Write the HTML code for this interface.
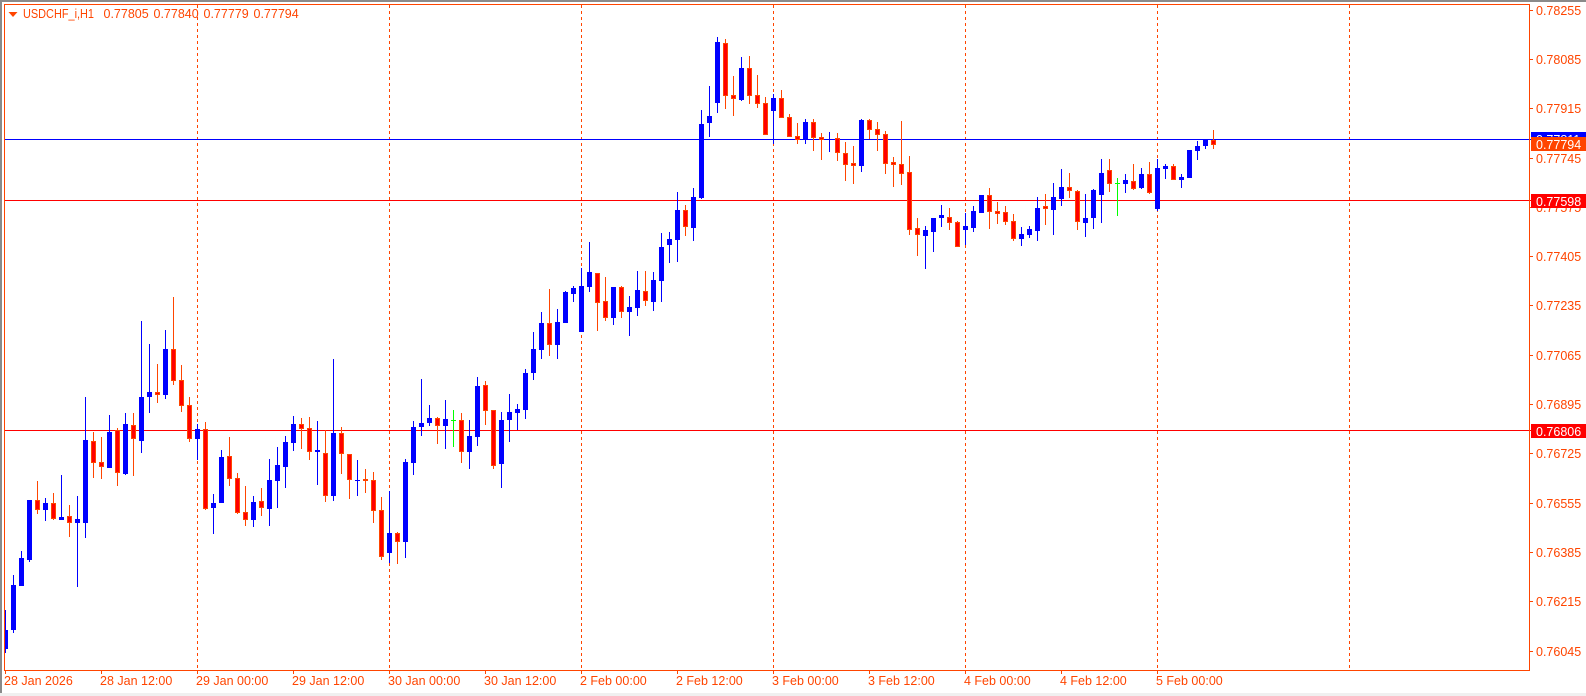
<!DOCTYPE html>
<html><head><meta charset="utf-8"><title>USDCHF_i,H1</title>
<style>
html,body{margin:0;padding:0;background:#fff;width:1586px;height:696px;overflow:hidden}
svg{display:block;position:absolute;left:0;top:0}
text{font-family:"Liberation Sans",sans-serif;font-size:12.5px;fill:#FF4500}
.w{fill:#fff}
</style></head><body>
<svg id="c" width="1586" height="696" viewBox="0 0 1586 696" xmlns="http://www.w3.org/2000/svg" shape-rendering="crispEdges">
<rect width="1586" height="696" fill="#fff"/>
<rect x="0" y="0" width="1586" height="2" fill="#8a8a8a"/>
<rect x="0" y="0" width="2" height="696" fill="#8a8a8a"/>
<rect x="0" y="693" width="1586" height="3" fill="#f0f0f0"/>
<g stroke="#FF4500" stroke-width="1" stroke-dasharray="3 3" fill="none">
<path d="M197.5 5V670M389.5 5V670M581.5 5V670M773.5 5V670M965.5 5V670M1157.5 5V670M1349.5 5V670"/>
</g>
<rect x="4" y="139" width="1527" height="1" fill="#0000FF"/>
<rect x="4" y="200" width="1527" height="1" fill="#FF0000"/>
<rect x="4" y="430" width="1527" height="1" fill="#FF0000"/>
<g id="k"></g>
<g fill="none" stroke="#FF4500" stroke-width="1">
<path d="M4.5 4.5H1529.5V670.5H4.5Z"/>
<path d="M1530 10.5h3M1530 59.5h3M1530 108.5h3M1530 158.5h3M1530 207.5h3M1530 256.5h3M1530 305.5h3M1530 355.5h3M1530 404.5h3M1530 453.5h3M1530 503.5h3M1530 552.5h3M1530 601.5h3M1530 651.5h3"/>
<path d="M5.5 671v3M101.5 671v3M197.5 671v3M293.5 671v3M389.5 671v3M485.5 671v3M581.5 671v3M677.5 671v3M773.5 671v3M869.5 671v3M965.5 671v3M1061.5 671v3M1157.5 671v3"/>
</g>
<polygon points="8.5,12 17.5,12 13,17" fill="#FF4500" shape-rendering="auto"/>
<g shape-rendering="auto">
<text x="23" y="18" textLength="71" lengthAdjust="spacingAndGlyphs">USDCHF_i,H1</text>
<text x="103.5" y="18">0.77805</text>
<text x="153.5" y="18">0.77840</text>
<text x="203.5" y="18">0.77779</text>
<text x="253.5" y="18">0.77794</text>
<text x="1536" y="15">0.78255</text>
<text x="1536" y="64">0.78085</text>
<text x="1536" y="113">0.77915</text>
<text x="1536" y="163">0.77745</text>
<text x="1536" y="212">0.77575</text>
<text x="1536" y="261">0.77405</text>
<text x="1536" y="310">0.77235</text>
<text x="1536" y="360">0.77065</text>
<text x="1536" y="409">0.76895</text>
<text x="1536" y="458">0.76725</text>
<text x="1536" y="508">0.76555</text>
<text x="1536" y="557">0.76385</text>
<text x="1536" y="606">0.76215</text>
<text x="1536" y="656">0.76045</text>
<text x="4" y="685">28 Jan 2026</text>
<text x="100" y="685">28 Jan 12:00</text>
<text x="196" y="685">29 Jan 00:00</text>
<text x="292" y="685">29 Jan 12:00</text>
<text x="388" y="685">30 Jan 00:00</text>
<text x="484" y="685">30 Jan 12:00</text>
<text x="580" y="685">2 Feb 00:00</text>
<text x="676" y="685">2 Feb 12:00</text>
<text x="772" y="685">3 Feb 00:00</text>
<text x="868" y="685">3 Feb 12:00</text>
<text x="964" y="685">4 Feb 00:00</text>
<text x="1060" y="685">4 Feb 12:00</text>
<text x="1156" y="685">5 Feb 00:00</text>
</g>
<rect x="1531" y="132" width="55" height="14" fill="#0000FF"/>
<text class="w" x="1536" y="144" shape-rendering="auto">0.77811</text>
<rect x="1531" y="137" width="55" height="14" fill="#FF4500"/>
<text class="w" x="1536" y="149" shape-rendering="auto">0.77794</text>
<rect x="1531" y="194" width="55" height="14" fill="#FF0000"/>
<text class="w" x="1536" y="206" shape-rendering="auto">0.77598</text>
<rect x="1531" y="424" width="55" height="14" fill="#FF0000"/>
<text class="w" x="1536" y="436" shape-rendering="auto">0.76806</text>
</svg>
<script>
var S=[
[280,"b990,1050,1107,1119 b885,915,1050,1058 b813,834,918,918 b660,660,840,846 r603,660,690,702 b654,669,690,723 r639,669,717,720 b585,711,720,720 r675,708,729,771 b648,717,729,921 b351,480,729,774 r456,483,549,594 r471,546,561,597 b405,456,564,564 r444,450,579,618 b399,432,582,585 r399,435,477,588 b123,351,483,519 b192,336,351,399 r252,336,345,369 b150,207,345,357 r51,207,303,315 r255,300,378,396 r351,375,477,486 b432,447,477,540 r426,447,687,690 b642,669,684,762 b510,531,669,669 r471,528,597,618 r579,594,699,702 r618,696,720,738"],
[340,"b468,486,540,561 r444,483,503,528 b357,420,507,558 b321,375,423,504 b288,306,381,444 b228,252,309,333 r234,252,267,327 r231,264,336,360 b243,330,336,435 r270,339,468,486 b57,279,468,483 r261,279,342,402 r342,342,420,477 b360,420,423,468 r387,417,423,459 r396,420,513,549 r471,510,651,660 b453,579,639,669 r576,579,606,672 b357,366,606,654 b243,261,369,405 b117,249,261,288 b195,234,249,258 r231,234,258,312 b180,237,258,327 g210,240,243,321 r219,240,336,369 b240,288,336,387 b111,138,291,318 r123,135,213,255 r210,210,378,387 b216,240,372,444 b162,216,240,306"],
[320,"b252,267,279,330 b147,159,270,297 b36,87,159,180"],
[170,"b426,459,540,567 r357,459,525,558 b417,456,525,567 b363,366,459,459 b348,354,372,396 b294,348,486,486 b216,306,351,366 r309,309,399,483 r321,393,444,453 b351,351,444,465 r348,351,426,444 b378,411,426,498 b303,360,414,438 r303,363,393,408 b306,330,396,423 b189,231,333,396 b186,207,225,279 b66,120,210,276"],
[30,"r525,540,591,618 b474,501,594,633 b240,282,504,507 b168,258,279,321 b21,36,219,249 r27,39,198,237 r138,195,207,258 b81,114,210,213 r78,114,198,222 r135,195,222,234 r201,219,315,315 b192,204,243,342 r180,204,264,264 r252,261,321,321 r279,318,330,342 b267,276,330,342 r267,276,324,363 r309,321,330,390 b306,327,330,366 r309,324,369,393 r336,369,405,453 r348,399,408,462 b267,270,408,426 r267,270,300,327 r276,297,315,363 r303,312,402,432 r381,396,405,471 r273,402,432,465 r378,426,600,615 r564,594,615,678 b588,600,618,717 b564,564,606,666"],
[120,"b255,285,294,321 r264,291,309,330 r303,306,381,381 b279,318,330,375 b258,273,324,336 b225,225,279,279 r204,225,276,327 r246,273,282,312 r258,276,306,315 r282,303,357,363 b321,342,357,378 b318,327,345,354 b231,264,333,363 r222,258,267,315 b189,231,270,345 b147,201,237,258 r159,201,213,234 r210,213,306,330 b222,294,309,351 b207,210,294,327 b117,159,225,309 r117,150,192,216 g174,189,192,288 b162,180,192,219 r132,183,207,210 b144,162,204,207 r126,162,219,222 b117,144,267,273 b132,138,147,177 r132,138,180,180 b162,171,180,204 b90,90,174,174 b63,78,93,120 b57,57,78,87 r30,60,75,87"]
];
var C={b:"#0000FF",r:"#FF4500",g:"#00FF00"},out=[],k=0;
function R(x,y,w,h,f){if(h>0&&w>0)out.push('<rect x="'+x+'" y="'+y+'" width="'+w+'" height="'+h+'" fill="'+f+'"/>');}
S.forEach(function(s){s[1].split(" ").forEach(function(c){
 var t=c[0],v=c.slice(1).split(",").map(function(n){return Math.round(+n/3)+s[0];}),x=5+8*k;
 R(x,v[0],1,v[3]-v[0],C[t]);
 var l=Math.max(x-2,5),w=x+3-l,h=v[2]-v[1];
 R(l,v[1],w,h,C[t]);
 if(t=="r"&&h>2)R(l+1,v[1]+1,w-2,h-2,"#FF0000");
 k++;
});});
document.getElementById("k").innerHTML=out.join("");
</script>
</body></html>
